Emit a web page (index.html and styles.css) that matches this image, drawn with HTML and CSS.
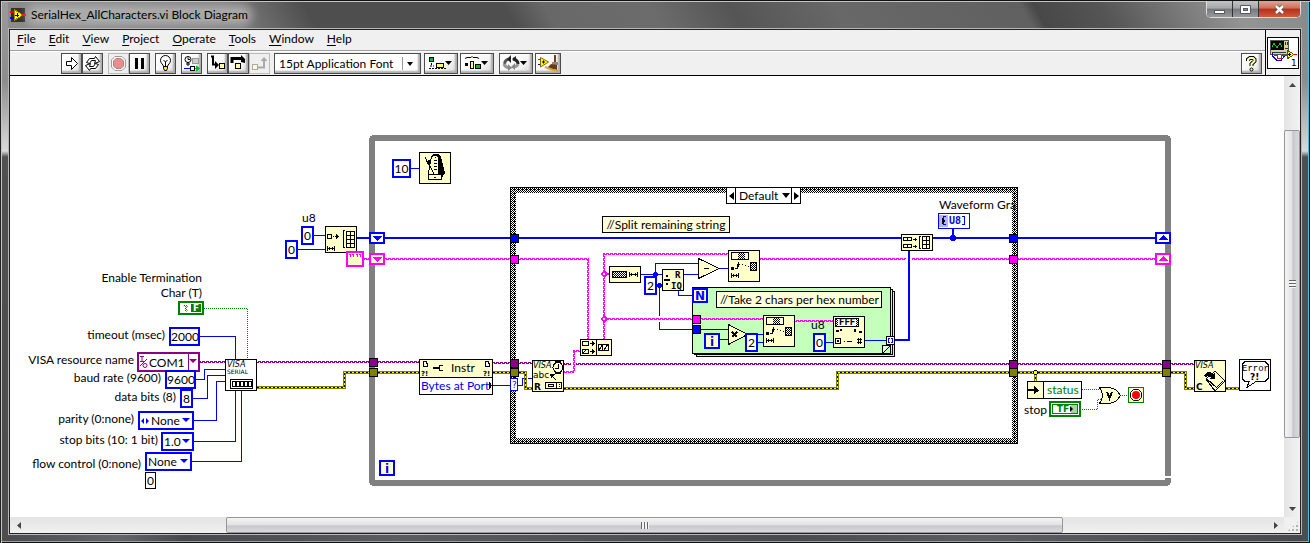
FILE: index.html
```
<!DOCTYPE html>
<html lang="en">
<head>
<meta charset="utf-8">
<title>SerialHex_AllCharacters.vi Block Diagram</title>
<link rel="stylesheet" href="styles.css">
</head>
<body>
<div class="window">
  <header class="titlebar">
    <svg class="app-icon" width="16" height="16" viewBox="0 0 16 16" shape-rendering="crispEdges">
      <rect x="1" y="1" width="14" height="14" fill="#33322a"/>
      <path d="M2 .5h12M2 15.5h12" stroke="#888" stroke-dasharray="1 1"/>
      <path d="M0 5h4" stroke="#f00" stroke-width="2"/><path d="M0 11h4" stroke="#00f" stroke-width="2"/>
      <path d="M4 2.500L13 8 4 13.500z" fill="#ff0" stroke="#a80" /><path d="M12 8h4" stroke="#f00" stroke-width="2"/>
      <path d="M5 8h4M7 6v4" stroke="#000"/>
    </svg>
    <h1 class="title">SerialHex_AllCharacters.vi Block Diagram</h1>
    <div class="caption-buttons">
      <button class="cap" aria-label="Minimize"><svg width="13" height="13" viewBox="0 0 13 13"><rect x="1.500" y="7.500" width="10" height="3" fill="#fff" stroke="#555a66"/></svg></button>
      <button class="cap" aria-label="Maximize"><svg width="13" height="13" viewBox="0 0 13 13"><path d="M1.500 2.500h10v8h-10z" fill="#fff" stroke="#555a66"/><rect x="4.500" y="5.500" width="4" height="2" fill="#8a8d94" stroke="#555a66"/></svg></button>
      <button class="cap close" aria-label="Close"><svg width="13" height="13" viewBox="0 0 13 13"><path d="M3 3l7 7M10 3l-7 7" stroke="#5a4a50" stroke-width="4"/><path d="M3 3l7 7M10 3l-7 7" stroke="#fff" stroke-width="2.500"/></svg></button>
    </div>
  </header>

  <main class="client">
    <div class="header">
      <div class="bars">
        <nav class="menubar">
          <button><u>F</u>ile</button><button><u>E</u>dit</button><button><u>V</u>iew</button><button><u>P</u>roject</button><button><u>O</u>perate</button><button><u>T</u>ools</button><button><u>W</u>indow</button><button><u>H</u>elp</button>
        </nav>
        <div class="toolbar">
          <div class="group">
            <button class="tool" aria-label="Run"><svg width="19" height="19" viewBox="0 0 19 19"><path d="M4.500 7.500h5v-4l6 6-6 6v-4h-5z" fill="#fff" stroke="#000"/></svg></button>
            <button class="tool" aria-label="Run continuously"><svg width="19" height="19" viewBox="0 0 19 19"><path d="M3.500 8.500l3-4h5l1-2 4 5-5 2 1-3h-4l-2 3zM15.500 10.500l-3 4h-5l-1 2-4-5 5-2-1 3h4l2-3z" fill="#fff" stroke="#000"/></svg></button>
          </div>
          <div class="group">
            <button class="tool flat" aria-label="Abort"><svg width="19" height="19" viewBox="0 0 19 19"><path d="M6 2.500h7L16.500 6v7L13 16.500H6L2.500 13V6z" fill="#fff" stroke="#999" /><path d="M7 4.500h5L14.500 7v5L12 14.500H7L4.500 12V7z" fill="#e88c8c" stroke="#b08080"/></svg></button>
            <button class="tool" aria-label="Pause"><svg width="19" height="19" viewBox="0 0 19 19"><path d="M5 4h3v11H5zM11 4h3v11h-3z"/></svg></button>
          </div>
          <button class="tool" aria-label="Highlight execution"><svg width="19" height="19" viewBox="0 0 19 19"><path d="M7.500 12.500c0-2-3-3-3-6a5 5 0 0 1 10 0c0 3-3 4-3 6z" fill="#fff" stroke="#000"/><path d="M9.500 12V8l-2-2M9.500 8l2-2" fill="none" stroke="#000"/><path d="M7.500 12.500h4v2l-1 2h-2l-1-2z" fill="#fd4" stroke="#000"/></svg></button>
          <button class="tool" aria-label="Retain wire values"><svg width="19" height="19" viewBox="0 0 19 19"><circle cx="6" cy="5.500" r="3" fill="#fff" stroke="#000"/><path d="M6 3.500v2h2M6 8v4M4 10h4" fill="none" stroke="#000"/><rect x="10.500" y="4.500" width="6" height="5" fill="#ccc" stroke="#999"/><path d="M2 14.500h6" stroke="#00f"/><rect x="8.500" y="12.500" width="4" height="4" fill="#fff" stroke="#000"/><path d="M13 14.500h4M14.500 12l3 2.500-3 2.500z" stroke="#0b2" fill="#0b2"/></svg></button>
          <div class="group steps">
            <button class="tool" aria-label="Step into"><svg width="19" height="19" viewBox="0 0 19 19"><path d="M3 2.500h2v8h3" fill="none" stroke="#000" stroke-width="2"/><path d="M7 7l4 4-4 4z"/><rect x="11.500" y="9.500" width="5" height="5" fill="#ffa" stroke="#000"/></svg></button>
            <button class="tool" aria-label="Step over"><svg width="19" height="19" viewBox="0 0 19 19"><path d="M3 9V4.500h10" fill="none" stroke="#000" stroke-width="3"/><path d="M12 1l4 4v4l-4-1z"/><rect x="6.500" y="9.500" width="5" height="5" fill="#ffa" stroke="#000"/></svg></button>
            <button class="tool flat" aria-label="Step out"><svg width="19" height="19" viewBox="0 0 19 19"><path d="M8 13.500h6V6" fill="none" stroke="#aaa" stroke-width="2"/><path d="M10.500 7L14 3l3.500 4z" fill="#aaa"/><rect x="2.500" y="10.500" width="5" height="5" fill="#ffc" stroke="#aaa"/></svg></button>
          </div>
          <span class="picker font-picker"><select aria-label="Text settings"><option>15pt Application Font</option></select></span>
          <button class="tool drop" aria-label="Align objects"><svg width="32" height="19" viewBox="0 0 32 19"><rect x="4.500" y="3.500" width="4" height="4" fill="#0b2" stroke="#000"/><path d="M6.500 9v3M5 12h4M4 14.500h18" stroke="#000" stroke-dasharray="2 1"/><rect x="11.500" y="9.500" width="7" height="4" fill="#ff6" stroke="#000"/><path d="M20 7h7l-3.500 4z"/></svg></button>
          <button class="tool drop" aria-label="Distribute objects"><svg width="32" height="19" viewBox="0 0 32 19"><path d="M4 4.500l2-1h4l1-1 1 1h4l2 1" fill="none" stroke="#000"/><rect x="4" y="9" width="3" height="3"/><rect x="9.500" y="7.500" width="3" height="7" fill="#ff6" stroke="#000"/><rect x="14.500" y="10.500" width="5" height="4" fill="#0b2" stroke="#000"/><path d="M20 7h7l-3.500 4z"/></svg></button>
          <button class="tool drop reorder" aria-label="Reorder"><svg width="32" height="19" viewBox="0 0 32 19"><path d="M5 10a5 4 0 0 1 5-5" fill="none" stroke="#555" stroke-width="3"/><path d="M13 5q5 1 5 5" fill="none" stroke="#222" stroke-width="3"/><path d="M11 1L7 5l4 4zM16 2l-4 3 4 3z" fill="#222"/><path d="M4 10q1 3 5 4M18 10q-1 3-5 3" fill="none" stroke="#999" stroke-width="3"/><path d="M8 10l4 4-4 3zM15 9l-4 4 4 3z" fill="#888"/><path d="M20 7h7l-3.500 4z"/></svg></button>
          <button class="tool wide" aria-label="Clean up diagram"><svg width="24" height="19" viewBox="0 0 24 19"><path d="M2 5.500h3" stroke="#f00"/><path d="M2 10.500h3" stroke="#00f"/><path d="M4.500 3.500l8 4.500-8 5z" fill="#ff0" stroke="#860"/><path d="M6 8h3M7.500 6.500v3" stroke="#000"/><path d="M19 1v7" stroke="#7a3a12" stroke-width="2"/><path d="M16 8h6v3h-6z" fill="#888"/><path d="M15 10l6 1v5l-10-2z" fill="#6a3c10"/><path d="M9 13l8 3 5 1" stroke="#d9a344" stroke-width="2" fill="none"/></svg></button>
          <button class="tool help" aria-label="Context help"><svg width="19" height="19" viewBox="0 0 19 19"><path d="M6 7V5.500L8 4h3l1.500 1.500V7L9.500 10v2" fill="none" stroke="#000" stroke-width="4"/><path d="M6 7V5.500L8 4h3l1.500 1.500V7L9.500 10v2" fill="none" stroke="#ffa" stroke-width="2"/><circle cx="9.500" cy="15.500" r="1.500" fill="#ffa" stroke="#000"/></svg></button>
        </div>
      </div>
      <div class="vi-pane">
        <svg width="32" height="32" viewBox="0 0 32 32" shape-rendering="crispEdges">
          <rect x=".5" y=".5" width="31" height="31" fill="#fff" stroke="#000"/>
          <rect x="3.500" y="3.500" width="18" height="14" fill="#d4d0a8" stroke="#555"/><rect x="4" y="4" width="13" height="9" fill="#000"/>
          <path d="M5 10l2-4 3 5 3-5 2 4" fill="none" stroke="#0c2"/><path d="M18.500 5v3M20.500 5v3M18 11.500h3M5 15.500h14" stroke="#333"/>
          <path d="M5.500 16v3l4 4h5l3-4" fill="none" stroke="#00c"/><path d="M7 18.500h3v3h4v-3h6" fill="none" stroke="#f00"/>
          <path d="M20 13l7 4.500-7 4.500z" fill="#ff0" stroke="#550"/><path d="M21 17.500h3M22.500 16v3" stroke="#000"/><path d="M27 17.500h3" stroke="#f00"/>
          <text class="t9" x="24" y="29">1</text>
        </svg>
      </div>
    </div>

    <div class="workspace">
      <div class="canvas">
        <div class="diagram">
          <svg class="wires" width="1310" height="543" viewBox="0 0 1310 543" shape-rendering="crispEdges">
            <defs>
              <pattern id="checker" width="2" height="2" patternUnits="userSpaceOnUse"><rect width="2" height="2" fill="#fff"/><path d="M0 0h1v1H0zM1 1h1v1H1z"/></pattern>
              <pattern id="weave" width="4" height="4" patternUnits="userSpaceOnUse"><rect width="4" height="4" fill="#fff"/><path d="M0 0h1v1H0zM2 0h1v1H2zM1 1h2v1H1zM3 1h1v1H3zM0 2h1v1H0zM2 2h1v1H2zM1 3h1v1H1zM3 3h1v1H3z"/></pattern>
              <pattern id="pink" width="4" height="2" patternUnits="userSpaceOnUse"><path d="M0 0h3v1H0zM2 1h2v1H2zM0 1h1v1H0z" fill="#f0f"/></pattern>
              <pattern id="pinkv" width="2" height="4" patternUnits="userSpaceOnUse"><path d="M0 0h1v3H0zM1 2h1v2H1zM1 0h1v1H1z" fill="#f0f"/></pattern>
              <pattern id="purple" width="4" height="2" patternUnits="userSpaceOnUse"><path d="M0 0h3v1H0zM2 1h2v1H2zM0 1h1v1H0z" fill="#808"/></pattern>
              <g id="substring"><rect class="node" x=".5" y=".5" width="31" height="31"/><path d="M3.500 2.500h17v7h-17z" fill="none" stroke="#000"/><path d="M10 3h7v6h-7z" fill="url(#checker)"/><rect x="3" y="17" width="3" height="3"/><path d="M7 18.500h2v-4h3M10.500 12v5M14 14.500h1M17 15.500h1M20 16.500h1M3.500 23v5M10.500 23v5M4 25.500h6M5.500 24v3M8.500 24v3" fill="none" stroke="#000"/><rect x="22.500" y="12.500" width="6" height="8" fill="url(#checker)" stroke="#000"/></g>
            </defs>

            <!-- while loop -->
            <rect x="372" y="138" width="796" height="345" rx="2" fill="none" stroke="#808080" stroke-width="6"/>
            <rect x="1164" y="476" width="8" height="2" fill="#fff"/>

            <!-- case structure -->
            <path fill="url(#weave)" fill-rule="evenodd" d="M510 187h508v257H510zM516 193v245h496V193z"/>
            <rect x="510.500" y="187.500" width="507" height="256" fill="none" stroke="#000"/>

            <!-- for loop -->
            <g fill="#c5ffbc" stroke="#000"><rect x="696.500" y="291.500" width="198" height="65"/><rect x="694.500" y="289.500" width="198" height="65"/><path d="M692.500 287.500h198v66h-198z"/><path d="M890.500 345.500h-8v8z" fill="#dfffd8"/></g>

            <!-- integer wires -->
            <g class="w-int">
              <path d="M200 336.500h35.500V359M196 379.500h8.500v-10H225M193 398.500h14.500v-23H225M194 420.500h22.500v-39H225M194 441.500h41.500V391M192 461.500h49.500V391"/>
              <path d="M411 168.500h8M314 235.500h11M298 249.500h27M493 385.500h17M518 385.500h4.500v-7h4M528 378.500h4"/>
              <path d="M641 274.500h21M655.500 276v-12.500H698M657 285.500h5M659.500 286v30M659.500 322v7.500H692M684 274.500h14M719 268.500h9M678.500 291v4.500H692"/>
              <path d="M701 329.500h27M720 339.500h8M747 334.500h16M758 342.500h5M826 342.500h7M865 340.500h21"/>
            </g>
            <g class="w-arr"><path d="M357 238h12M385 238h125M519 238h382M933 238h76M1018 238h137M953 229v9M894 340h15v-89"/></g>
            <g fill="#00f"><circle cx="655.500" cy="274.500" r="2.500"/><circle cx="659.500" cy="285.500" r="2.500"/><circle cx="953" cy="238" r="3"/></g>

            <!-- string wires -->
            <g class="w-str"><path d="M364 259h5M385 259h125M519 259h70M603 254h125M760 259h146M912 259h97M1018 259h137M604 274h5M604 319h88M701 319h62M795 321h38M564 372h10M573 351h7"/><path class="v" d="M588 259v80M604 254v85M574 351v21"/></g>
            <path d="M604 270l4 4-4 4-4-4zM604 315l4 4-4 4-4-4z" fill="#f0f"/><path d="M603 273h2v2h-2zM603 318h2v2h-2z" fill="#fff"/>

            <!-- VISA session wires -->
            <path class="w-visa" d="M200 362h25M257 362h112M378 362h41M493 363h17M519 363h13M564 364h7M576 364h433M1018 364h144M1171 364h23"/>

            <!-- error wires -->
            <g id="err">
              <path class="w-err" d="M257 387.500h87.500v-15H369M378 372.500h41M493 372.500h17M519 372.500h6.500v16h6.500M564 388.500h273.500v-16H1009M1018 372.500h144M1171 372.500h14.500v16h8.500M1226 388.500h13M1035.500 373v8"/>
              <path class="w-err y" d="M257 387.500h87.500v-15H369M378 372.500h41M493 372.500h17M519 372.500h6.500v16h6.500M564 388.500h273.500v-16H1009M1018 372.500h144M1171 372.500h14.500v16h8.500M1226 388.500h13M1035.500 373v8"/>
              <path class="w-err k" d="M257 387.500h87.500v-15H369M378 372.500h41M493 372.500h17M519 372.500h6.500v16h6.500M564 388.500h273.500v-16H1009M1018 372.500h144M1171 372.500h14.500v16h8.500M1226 388.500h13M1035.500 373v8"/>
              <circle cx="1035.500" cy="372.500" r="2" fill="#ff0" stroke="#000"/>
            </g>

            <!-- boolean wires -->
            <path class="w-bool" d="M204 308.500h43.500V359M1082 389.500h20M1082 409.500h15.500v-10h5M1120 395.500h8"/>

            <!-- tunnels -->
            <g stroke="#000">
              <g fill="#00f"><rect x="510.500" y="234.500" width="8" height="8"/><rect x="1009.500" y="234.500" width="8" height="8"/><rect x="692.500" y="325.500" width="8" height="8"/></g>
              <g fill="#f0f"><rect x="510.500" y="255.500" width="8" height="8"/><rect x="1009.500" y="255.500" width="8" height="8"/><rect x="692.500" y="315.500" width="8" height="8"/></g>
              <g fill="#808"><rect x="369.500" y="358.500" width="8" height="8"/><rect x="510.500" y="359.500" width="8" height="8"/><rect x="1009.500" y="360.500" width="8" height="8"/><rect x="1162.500" y="360.500" width="8" height="8"/></g>
              <g fill="#808000"><rect x="369.500" y="368.500" width="8" height="8"/><rect x="510.500" y="368.500" width="8" height="8"/><rect x="1009.500" y="368.500" width="8" height="8"/><rect x="1162.500" y="368.500" width="8" height="8"/></g>
            </g>
            <rect x="886.500" y="336.500" width="8" height="8" fill="#fff" stroke="#000"/><path d="M890 338.500h-1.500v4h1.500M891 338.500h1.500v4H891" fill="none" stroke="#00f"/>
            <rect x="510.500" y="378.500" width="7" height="12" fill="#fff" stroke="#00f"/><text class="t9 blue" x="512" y="388">?</text>

            <!-- shift registers -->
            <g fill="#fff" stroke="#00f" stroke-width="2"><rect x="370" y="233" width="14" height="10"/><rect x="1156" y="233" width="14" height="10"/></g>
            <g fill="#ffffcb" stroke="#f0f" stroke-width="2"><rect x="370" y="254" width="14" height="10"/><rect x="1156" y="254" width="14" height="10"/></g>
            <path d="M372 236h10l-5 5zM1158 240h10l-5-5z" fill="#00f"/><path d="M372 257h10l-5 5zM1158 261h10l-5-5z" fill="#f0f"/>

            <!-- wait -->
            <g transform="translate(419 152)"><rect class="node" x=".5" y=".5" width="31" height="31"/><path d="M14 2h5l3 3 4 16-3 5h-4z"/><path d="M12.500 4.500l2-1h4l1 2v19h-10v-4z" fill="#ffffcb" stroke="#000"/><path d="M9.500 22.500h13v5h-13z" fill="#ffffcb" stroke="#000"/><path d="M16.500 5v1M15 8.500h3M15 11.500h3M15 14.500h3M15 17.500h3M15 25.500h2" stroke="#000"/><path d="M6 5l9 17" stroke="#000"/><path d="M7 9l4-1 1 3-3 2z"/></g>

            <!-- initialize array -->
            <g transform="translate(325 226)"><rect class="node" x=".5" y=".5" width="31" height="26"/><path d="M2.500 8.500h4v4h-4zM8 10.500h1M10 10.500h4M2.500 20v5M9.500 20v5M3 22.500h6M4.500 21v3M7.500 21v3M19.500 4l-1.500 2v14l1.500 2" fill="none" stroke="#000"/><path d="M11 8l3 2.500-3 2.500z"/><path d="M21.500 5.500h8v16h-8zM25.500 5v16M21 9.500h8M21 13.500h8M21 17.500h8" fill="none" stroke="#000" /></g>
            <rect x="347" y="252" width="16" height="14" fill="#ffffcb" stroke="#f0f" stroke-width="2"/><path d="M349 254.500h2M352 254.500h2M356 254.500h2M359 254.500h2M350.500 254v3M353.500 254v3M357.500 254v3M360.500 254v3" stroke="#f0f"/>

            <!-- string length -->
            <g transform="translate(609 266)"><rect class="node" x=".5" y=".5" width="31" height="16"/><rect x="3.500" y="5.500" width="14" height="6" fill="url(#checker)" stroke="#000"/><path d="M20.500 6v5M28.500 6v5M20 8.500h8M22.500 7v3M26.500 7v3" stroke="#000"/></g>

            <!-- quotient and remainder -->
            <g transform="translate(662 269)"><rect class="node" x=".5" y=".5" width="21" height="21"/><path d="M2 11h6M4 7h2M4 15h2" stroke="#000" stroke-width="2"/><text class="t9m b" x="13" y="9">R</text><text class="t9m b" x="9" y="20">IQ</text></g>
            <path class="node" d="M698.500 258.500v20l20.500-10z"/><path d="M704 268.500h5" stroke="#000"/>
            <path class="node" d="M728.500 324.500v20l19-10z"/><path d="M732 332l5 5M737 332l-5 5" stroke="#000" stroke-width="2"/>

            <use href="#substring" x="728" y="250"/>
            <use href="#substring" x="763" y="315"/>

            <!-- hex string to number -->
            <g transform="translate(833 316)"><rect class="node" x=".5" y=".5" width="31" height="31"/><rect x="2.500" y="2.500" width="23" height="8" fill="url(#checker)" stroke="#000"/><rect x="5" y="3" width="18" height="7" fill="#fff"/><text class="t9m b" x="6" y="9">FFF</text><path d="M3 14h3v2H3zM26 15h3v2h-3zM4 24h2v2H4zM11 25h1v1h-1zM14 25h5v1h-5zM7 13h2v2H7zM21 13h2v3h-2z"/><rect x="2.500" y="22.500" width="5" height="5" fill="none" stroke="#000"/><path d="M24 23.500h5M24 26.500h5M25.500 22v6M27.500 22v6" stroke="#000"/></g>

            <!-- concatenate strings -->
            <g transform="translate(580 339)"><rect class="node" x=".5" y=".5" width="31" height="16"/><path d="M16.500 0v17M2.500 2.500h6v4h-6zM10 4.500h5M10 12.500h5M2.500 10.500h6v4h-6zM3 14l4-4M18.500 5.500h10v6h-10zM22.500 5v6M19 11l4-6M24 11l4-6" fill="none" stroke="#000"/><path d="M12 2l3 2.500-3 2.500zM12 10l3 2.500-3 2.500z"/></g>

            <!-- build array -->
            <g transform="translate(901 234)"><rect class="node" x=".5" y=".5" width="31" height="16"/><path d="M2.500 3.500h8v3h-8zM6.500 3v4M2.500 10.500h8v3h-8zM6.500 10v4M12 5.500h4M14.500 4v3M12 12.500h4M14.500 11v3M19.500 2l-1.500 2v9l1.500 2M21.500 2.500h7v12h-7zM25.500 2v12M21 6.500h8M21 10.500h8" fill="none" stroke="#000"/></g>

            <!-- U8 array indicator -->
            <g transform="translate(938 213)"><rect x=".5" y=".5" width="31" height="15" fill="#fff" stroke="#00f"/><rect x="1" y="2" width="9" height="12" fill="#b4b4ff"/><path d="M8 3.500H5.500v8H8M24 3.500h2.500v8H24" fill="none" stroke="#00f"/><path d="M4 5l3 3-3 3z"/><text class="t10m b blue" x="11" y="11">U8</text></g>

            <!-- VISA configure serial port -->
            <g transform="translate(225 359)"><rect x=".5" y=".5" width="31" height="31" fill="#fff" stroke="#000"/><text class="t8 i" x="2" y="8">VISA</text><text class="t6" x="2" y="15">SERIAL</text><rect x="5.500" y="20.500" width="22" height="9" fill="#fff" stroke="#000"/><g fill="#fff" stroke="#000"><path d="M7.500 22.500h3v5h-3zM11.500 22.500h3v5h-3zM15.500 22.500h3v5h-3zM19.500 22.500h3v5h-3zM23.500 22.500h3v5h-3z"/></g></g>

            <!-- property node -->
            <g transform="translate(419 359)"><rect x=".5" y=".5" width="73" height="35" fill="#fff" stroke="#000"/><path class="node" d="M.5.5h73v18H.5z"/><path d="M4.500 2.500h3v2h1v3h-4v-5zM66.500 2.500h3v2h1v3h-4v-5z" fill="#fff" stroke="#000"/><text class="t7 b" x="2" y="17">?!</text><text class="t7 b" x="64" y="17">?!</text><path d="M14 8h6v2h-6zM20 6h4v1h-3v4h3v1h-4z"/><path d="M70 22l3 4.500-3 4.500z"/></g>

            <!-- VISA read -->
            <g transform="translate(532 360)"><rect class="node" x=".5" y=".5" width="31" height="31"/><text class="t8 i" x="1" y="8">VISA</text><text class="t9" x="1" y="18">abc</text><text class="t9 b" x="2" y="30">R</text><circle cx="26" cy="7.500" r="5" fill="#ffffcb" stroke="#000"/><path d="M23 1h6v2h-6zM23 12h6v2h-6z"/><path d="M26.500 4v4H23M19 15l5 5" fill="none" stroke="#000"/><path d="M18 14h5l-4 4z"/><path d="M13.500 22.500h16v6h-16zM16.500 24.500h5v2h-5zM24.500 23v5M27.500 24v1M27.500 26v1" fill="none" stroke="#000"/></g>

            <!-- unbundle by name -->
            <g transform="translate(1027 381)"><rect x=".5" y=".5" width="54" height="17" fill="#fff" stroke="#000"/><path class="node" d="M.5.5h16v17H.5z"/><path d="M1 8h6V5l5 4.500L7 13v-3H1z"/></g>
            <path class="node" d="M1099.500 387.500h10q7 1 11 8-4 7-11 8h-10q6-8 0-16z"/><path d="M1107 392l2.500 6 2.500-6" fill="none" stroke="#000" stroke-width="2"/>

            <!-- VISA close -->
            <g transform="translate(1194 360)"><rect class="node" x=".5" y=".5" width="31" height="31"/><text class="t8 i" x="1" y="8">VISA</text><text class="t9 b" x="2" y="30">C</text><path d="M21 11l10 10-10 10-9-12z" fill="#ffffcb" stroke="#000"/><path d="M13 19l10 9M22 28l7-7" stroke="#000"/><path d="M10 16c2-5 6-5 9-2l2-1v6h-6l2-2c-2-2-4-2-5 1z" /></g>

            <!-- simple error handler -->
            <g transform="translate(1239 359)"><rect x=".5" y=".5" width="31" height="31" fill="#fff" stroke="#000"/><path d="M6 2.500h20l3 3v14l-3 3H17l-9 6 2-6H6l-3-3v-14z" fill="#fff" stroke="#000"/><text class="t8m" x="3" y="12">Error</text><text class="t9 b" x="11" y="21">?!</text></g>

            <!-- iteration and count terminals -->
            <g fill="#ffffcb" stroke="#00f" stroke-width="2"><rect x="380" y="461" width="14" height="14"/><rect x="705" y="334" width="14" height="14"/><rect x="693" y="289" width="14" height="13" fill="#fff"/></g>
            <g class="term"><text x="385" y="473">i</text><text x="710" y="346">i</text><text x="695" y="300">N</text></g>
          </svg>

          <label class="lbl l-term" for="c-term">Enable Termination<br>Char (T)</label>
          <button class="bool c-term" id="c-term"><span class="ghost"></span><b>F</b></button>
          <label class="lbl l-timeout" for="c-timeout">timeout (msec)</label>
          <input class="const c-timeout" id="c-timeout" value="2000">
          <label class="lbl l-visa" for="c-visa">VISA resource name</label>
          <span class="ring visa c-visa"><svg width="9" height="14" viewBox="0 0 9 14"><path d="M1 1.500h4M3 1.500v5M1 6.500h4M1 11L8 4" stroke="#808" fill="none"/><circle cx="6" cy="10.500" r="2" stroke="#808" fill="none"/></svg><select id="c-visa"><option>COM1</option></select></span>
          <label class="lbl l-baud" for="c-baud">baud rate (9600)</label>
          <input class="const c-baud" id="c-baud" value="9600">
          <label class="lbl l-bits" for="c-bits">data bits (8)</label>
          <input class="const c-bits" id="c-bits" value="8">
          <label class="lbl l-parity" for="c-parity">parity (0:none)</label>
          <span class="ring c-parity"><svg width="8" height="6" viewBox="0 0 8 6"><path d="M3 0v6L0 3zM5 0v6l3-3z" fill="#00f"/></svg><select id="c-parity"><option>None</option></select></span>
          <label class="lbl l-stop" for="c-stop">stop bits (10: 1 bit)</label>
          <span class="ring c-stop"><select id="c-stop"><option>1.0</option></select></span>
          <label class="lbl l-flow" for="c-flow">flow control (0:none)</label>
          <span class="ring c-flow"><select id="c-flow"><option>None</option></select></span>
          <input class="const plain c-zero" aria-label="Flow control value" value="0">

          <label class="lbl l-u8a" for="c-init">u8</label>
          <input class="const c-init" id="c-init" value="0">
          <input class="const c-size" aria-label="Dimension size" value="0">
          <input class="const c-wait" aria-label="Milliseconds to wait" value="10">

          <span class="selector"><button aria-label="Previous case"><svg width="5" height="8" viewBox="0 0 5 8"><path d="M5 0v8L0 4z"/></svg></button><select aria-label="Case"><option>Default</option></select><button aria-label="Next case"><svg width="5" height="8" viewBox="0 0 5 8"><path d="M0 0v8l5-4z"/></svg></button></span>
          <p class="note n-split">//Split remaining string</p>
          <p class="note n-take">//Take 2 chars per hex number</p>
          <input class="const c-two" aria-label="Divisor" value="2">
          <input class="const c-len" aria-label="Length" value="2">
          <label class="lbl l-u8b" for="c-def">u8</label>
          <input class="const c-def" id="c-def" value="0">
          <span class="lbl l-wave">Waveform Gra</span>
          <span class="lbl l-instr">Instr</span>
          <span class="lbl l-bytes">Bytes at Port</span>
          <span class="lbl l-status">status</span>
          <label class="lbl l-stopbtn" for="c-stopbtn">stop</label>
          <button class="bool tf c-stopbtn" id="c-stopbtn"><b>TF</b></button>
          <button class="halt" aria-label="Loop condition"><svg width="12" height="12" viewBox="0 0 12 12"><path d="M3.500.5h5l3 3v5l-3 3h-5l-3-3v-5z" fill="#fff" stroke="#000"/><circle cx="6" cy="6" r="4" fill="#f00"/></svg></button>
        </div>
      </div>
      <div class="scroll vertical">
        <button aria-label="Scroll up"><svg width="7" height="4" viewBox="0 0 7 4"><path d="M0 4h7L3.500 0z"/></svg></button>
        <div class="track"><i class="before"></i><i class="thumb"></i><i class="after"></i></div>
        <button aria-label="Scroll down"><svg width="7" height="4" viewBox="0 0 7 4"><path d="M0 0h7L3.500 4z"/></svg></button>
      </div>
      <div class="scroll horizontal">
        <button aria-label="Scroll left"><svg width="4" height="7" viewBox="0 0 4 7"><path d="M4 0v7L0 3.500z"/></svg></button>
        <div class="track"><i class="before"></i><i class="thumb"></i><i class="after"></i></div>
        <button aria-label="Scroll right"><svg width="4" height="7" viewBox="0 0 4 7"><path d="M0 0v7l4-3.500z"/></svg></button>
      </div>
      <div class="grip"></div>
    </div>
  </main>
</div>
</body>
</html>
```

FILE: styles.css
```
* { box-sizing: border-box; }
body { margin: 0; font: 12px/16px Lato, "Open Sans", sans-serif; color: #000; }
button, input, select { font: inherit; color: inherit; margin: 0; padding: 0; border: 0; border-radius: 0; background: none; appearance: none; outline: 0; }
svg { display: block; }

.window {
  height: 100vh; min-height: 400px; display: flex; flex-direction: column;
  padding: 0 8px 9px; overflow: hidden;
  border-top: 1px solid #111;
  box-shadow: inset 1px 0 #222, inset 2px 1px #c4c4c4, inset -1px 0 #111, inset 0 -1px #111, inset -2px -2px #33c4ea;
  background:
    linear-gradient(180deg, #9a9a9a 0, #8d8d8d 80px, #dadada 150px, #505050 156px, #4d4d4d) left / 8px 100% no-repeat,
    linear-gradient(180deg, #8a8a8a 0, #8d8d8d 80px, #dadada 150px, #505050 156px, #4d4d4d) right / 8px 100% no-repeat,
    linear-gradient(90deg, #4a4a4a 0, #666 9%, #484848 14%, #5c5c5c 30%, #4a4a4a 60%, #5e5e5e 75%, #484848) bottom / 100% 9px no-repeat,
    linear-gradient(60deg, #8c8c8c 0, #7c7c7c 18%, #4e4e4e 24%, #4e4e4e 39%, #686868 42%, #6c6c6c 50%, #555 56%, #686868 64%, #606060 78%, #484848 79%, #555 84%, #949494 94%, #8a8a8a) top / 100% 28px no-repeat,
    #555;
}

.titlebar { height: 27px; flex: none; display: flex; align-items: center; padding-left: 2px; }
.app-icon { flex: none; }
.title {
  margin: 0 0 0 5px; font-size: 12px; font-weight: 400; line-height: 12px; white-space: nowrap;
  background: rgba(195, 195, 195, .6); box-shadow: 0 0 8px 5px rgba(195, 195, 195, .6); border-radius: 6px;
}
.caption-buttons { align-self: flex-start; display: flex; height: 17px; margin: 0 1px 0 auto; border: 1px solid #ddd; border-top: 0; border-radius: 0 0 5px 5px; overflow: hidden; background: #333; gap: 1px; }
.cap { width: 25px; display: grid; place-items: center; background: linear-gradient(#c4c4c6 0, #a6a7a9 45%, #77787c 50%, #9a9a9e); }
.cap.close { width: 41px; background: linear-gradient(#e0a596 0, #cf6f5a 45%, #b5301a 50%, #d05a3c); }

.client { flex: 1; min-height: 0; display: flex; flex-direction: column; border: 1px solid #222; outline: 1px solid #b8b8b8; margin: 1px 1px 0; background: #f0f0f0; }
.header { display: flex; border-bottom: 1px solid #000; }
.bars { flex: 1; min-width: 0; }
.menubar { display: flex; height: 21px; border-bottom: 1px solid #a0a0a0; align-items: flex-start; }
.menubar button { padding: 0 6px 0 7px; line-height: 18px; }
.menubar u { text-underline-offset: 2px; }
.toolbar { display: flex; height: 24px; align-items: center; padding: 0 3px 0 51px; border-top: 1px solid #fff; }
.group { display: flex; margin-right: 5px; }
.group.steps { margin-right: 4px; }
.tool {
  width: 21px; height: 21px; flex: none; margin-right: 5px; border: 1px solid #4c4c4c;
  background: linear-gradient(135deg, #fff 0, #f6f6f6 60%, #d8d8d8);
  box-shadow: inset -2px -2px 2px #aaa, inset 1px 1px #fff;
}
.group .tool { margin: 0; }
.tool.flat { border-color: #bbb; background: #efefef; box-shadow: none; }
.tool.drop { width: 34px; margin-right: 2px; }
.tool.reorder { margin-left: 3px; }
.tool.wide { width: 26px; }
.tool.help { margin: 0 0 0 auto; }
.picker { position: relative; width: 147px; height: 21px; flex: none; margin: 0 3px 0 0; border: 1px solid #4c4c4c; background: #fff; box-shadow: inset -2px -2px 2px #aaa; }
.picker select { width: 100%; height: 19px; padding-left: 4px; }
.picker::after { content: ""; position: absolute; right: 7px; top: 8px; border: 3px solid transparent; border-top: 4px solid #000; border-bottom: 0; }
.picker::before { content: ""; position: absolute; right: 17px; top: 3px; height: 13px; border-left: 1px solid #999; }
.vi-pane { width: 35px; border-left: 1px solid #000; display: grid; place-items: center; }

.workspace { flex: 1; min-height: 0; display: grid; grid-template-columns: 1fr 16px; grid-template-rows: 1fr 16px; }
.canvas { position: relative; overflow: hidden; background: #fff; min-width: 0; min-height: 0; }

/* The diagram plane is scrolled: its origin lies outside the viewport. */
.diagram { position: absolute; left: -10px; top: -76px; }

.scroll { display: flex; background: linear-gradient(90deg, #e4e4e4, #f2f2f2); }
.scroll.vertical { flex-direction: column; }
.scroll button { flex: 0 0 17px; display: grid; place-items: center; fill: #444; }
.track { flex: 1; display: flex; }
.vertical .track { flex-direction: column; }
.thumb { display: grid; place-items: center; border: 1px solid #979797; border-radius: 2px; background: linear-gradient(90deg, #f4f4f4, #e2e2e4 50%, #c8c8cc 55%, #dadadd); }
.horizontal { background: linear-gradient(#e4e4e4, #f0f0f0); }
.horizontal .thumb { flex: 837; background: linear-gradient(#f4f4f4, #e2e2e4 50%, #c8c8cc 55%, #dadadd); }
.horizontal .before { flex: 199; }
.horizontal .after { flex: 204; }
.vertical .before { flex: 37; }
.vertical .thumb { flex: 308; }
.vertical .after { flex: 62; }
.thumb::after { content: ""; width: 8px; height: 7px; background: repeating-linear-gradient(90deg, #666 0 1px, #f4f4f4 1px 3px); }
.vertical .thumb::after { width: 7px; height: 8px; background: repeating-linear-gradient(#666 0 1px, #f4f4f4 1px 3px); }
.grip { background: radial-gradient(circle at 1px 1px, #b0b0b0 1px, transparent 1px) 0 0 / 4px 4px; clip-path: polygon(100% 20%, 100% 90%, 20% 90%); }

/* wires and nodes */
.wires path.node, .wires rect.node { fill: #ffffcb; stroke: #000; }
.w-int { fill: none; stroke: #00f; }
.w-arr { fill: none; stroke: #00f; stroke-width: 2; }
.w-str { fill: none; stroke: url(#pink); stroke-width: 2; }
.w-str .v { stroke: url(#pinkv); }
.w-visa { fill: none; stroke: url(#purple); stroke-width: 2; }
.w-err { fill: none; stroke: #808000; stroke-width: 3; }
.w-err.y { stroke: #ff0; stroke-width: 1; }
.w-err.k { stroke: #000; stroke-width: 1; stroke-dasharray: 2 2; }
.w-bool { fill: none; stroke: #008000; stroke-dasharray: 1 1; }
.t6 { font: 6px "DejaVu Sans", sans-serif; }
.t7 { font: 7px "DejaVu Sans", sans-serif; }
.t8 { font: 8px "DejaVu Sans", sans-serif; }
.t8m { font: 9px "Liberation Mono", monospace; }
.t9m { font: 9px "DejaVu Sans Mono", monospace; }
.t10m { font: 10px "DejaVu Sans Mono", monospace; }
.t9 { font: 9px "DejaVu Sans", sans-serif; }
.b { font-weight: 700; }
.i { font-style: italic; }
.blue { fill: #00f; }
.term { font: 700 12px "DejaVu Sans", sans-serif; fill: #00f; }

/* labels and terminals on the diagram */
.diagram > .lbl, .const, .ring, .bool, .note, .selector, .halt { position: absolute; }
.lbl { left: 10px; text-align: right; white-space: nowrap; line-height: 15px; }
.l-term { top: 270px; width: 192px; }
.l-timeout { top: 327px; width: 155px; }
.l-visa { top: 352px; width: 124px; }
.l-baud { top: 370px; width: 151px; }
.l-bits { top: 389px; width: 166px; }
.l-parity { top: 411px; width: 124px; }
.l-stop { top: 432px; width: 148px; }
.l-flow { top: 456px; width: 131px; }
.l-u8a { left: 302px; top: 210px; }
.l-u8b { left: 811px; top: 317px; }
.l-wave { left: 939px; top: 197px; }
.l-instr { left: 451px; top: 360px; }
.l-bytes { left: 421px; top: 378px; color: #00f; }
.l-status { left: 1047px; top: 382px; color: #008000; }
.l-stopbtn { left: 1024px; top: 402px; }

.const { height: 19px; width: 13px; border: 2px solid #00f; background: #fff; text-align: center; line-height: 15px; }
.const.plain { border: 1px solid #000; width: 11px; height: 17px; }
.c-timeout { left: 169px; top: 327px; width: 31px; }
.c-baud { left: 165px; top: 370px; width: 31px; }
.c-bits { left: 180px; top: 389px; }
.c-zero { left: 145px; top: 472px; }
.c-init { left: 301px; top: 226px; }
.c-size { left: 285px; top: 240px; }
.c-wait { left: 392px; top: 159px; width: 19px; }
.c-two { left: 644px; top: 276px; }
.c-len { left: 745px; top: 333px; }
.c-def { left: 813px; top: 333px; }

.ring { display: flex; align-items: center; height: 19px; border: 2px solid #00f; background: #fff; padding-left: 1px; gap: 2px; }
.ring select { flex: 1; min-width: 0; height: 15px; line-height: 15px; }
.ring::after { content: ""; position: absolute; right: 2px; top: 5px; border: 4px solid transparent; border-top-color: #00f; border-bottom: 0; }
.ring.visa { height: 20px; border-color: #808; padding-left: 0; gap: 1px; }
.ring.visa::after { right: 1px; border-top-color: #808; }
.ring.visa::before { content: ""; position: absolute; right: 9px; top: 0; bottom: 0; border-left: 1px solid #808; }
.c-visa { left: 137px; top: 352px; width: 63px; }
.c-parity { left: 138px; top: 411px; width: 56px; }
.c-stop { left: 161px; top: 432px; width: 33px; }
.c-flow { left: 145px; top: 452px; width: 47px; }

.bool { display: flex; align-items: center; justify-content: flex-end; gap: 3px; border: 2px solid #008000; background: #fff; font: 9px/8px "DejaVu Sans", sans-serif; }
.c-term { left: 178px; top: 301px; width: 26px; height: 14px; padding: 1px; }
.c-term b { width: 10px; background: #008000; color: #fff; }
.ghost { width: 5px; height: 7px; background: repeating-conic-gradient(#008000 0 25%, #fff 0 50%) 0 0 / 2px 2px; clip-path: polygon(0 0, 100% 0, 100% 25%, 70% 50%, 100% 100%, 40% 100%, 40% 25%, 0 25%); }
.tf { left: 1049px; top: 401px; width: 32px; height: 16px; color: #008000; justify-content: center; background: linear-gradient(90deg, #fff 70%, #a4d4a4 70%); box-shadow: inset 0 0 0 1px #fff, inset 0 0 0 2px #008000; }
.tf::after { content: ""; border: 3px solid transparent; border-left-color: #000; border-right: 0; margin-left: -2px; }

.note { margin: 0; height: 17px; padding: 0 3px; border: 1px solid #000; background: #ffffdb; line-height: 15px; white-space: nowrap; text-align: center; }
.n-split { left: 602px; top: 216px; width: 128px; }
.n-take { left: 716px; top: 291px; width: 166px; }

.selector { left: 726px; top: 187px; width: 75px; height: 17px; display: flex; border: 1px solid #000; background: #fff; }
.selector button { width: 8px; flex: none; display: grid; place-items: center; }
.selector select { flex: 1; min-width: 0; border: 1px solid #000; border-width: 0 1px; padding-left: 3px; line-height: 15px; }
.selector::after { content: ""; position: absolute; right: 10px; top: 5px; border: 4px solid transparent; border-top: 5px solid #000; border-bottom: 0; }

.halt { left: 1128px; top: 387px; width: 16px; height: 16px; display: grid; place-items: center; border: 1px solid #008000; background: #ffffcb; }
```
